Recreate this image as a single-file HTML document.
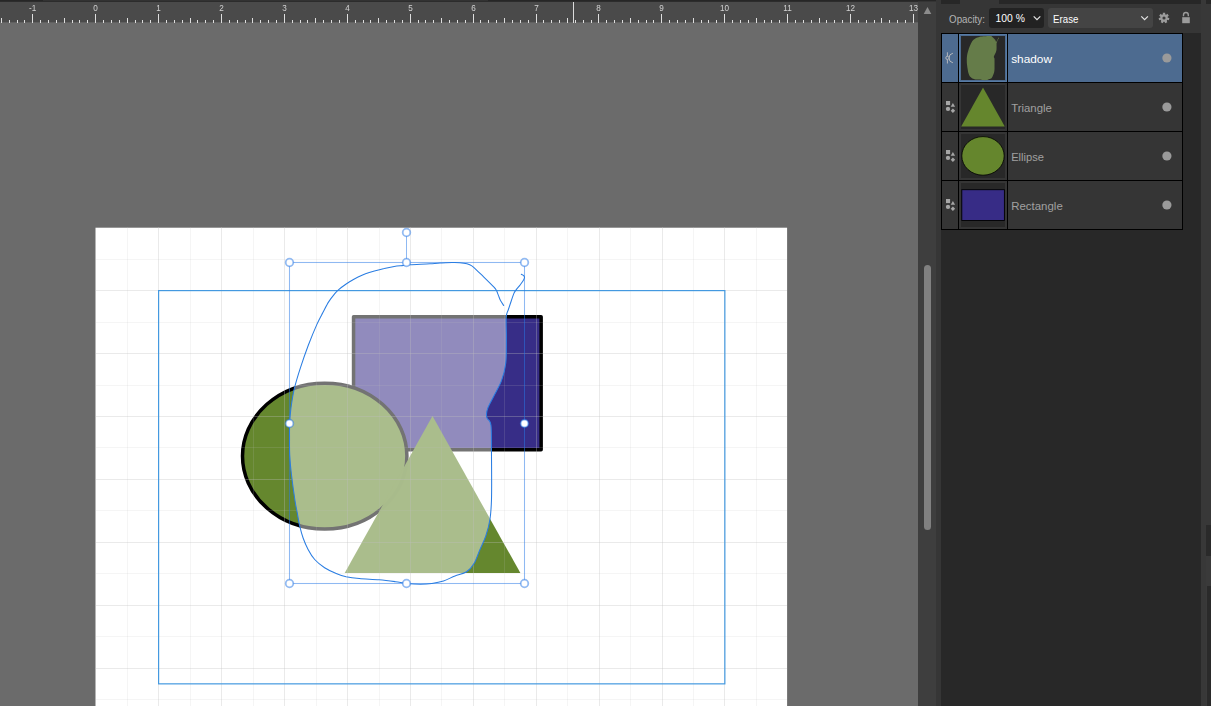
<!DOCTYPE html>
<html><head><meta charset="utf-8"><title>Layers</title>
<style>
html,body{margin:0;padding:0;background:#6b6b6b;}
body{width:1211px;height:706px;overflow:hidden;position:relative;font-family:"Liberation Sans",sans-serif;}
svg{position:absolute;left:0;top:0;}
svg text{font-family:"Liberation Sans",sans-serif;}
#rl{will-change:transform;}
</style></head><body>
<svg id="cv" width="1211" height="706" viewBox="0 0 1211 706">
<rect x="0" y="0" width="918" height="706" fill="#6b6b6b"/>
<!-- page -->
<rect x="95.5" y="227.7" width="691.6" height="480" fill="#fff"/>
<!-- shapes -->
<rect x="353.55" y="316.65" width="187.6" height="133.2" fill="#372d87" stroke="#000" stroke-width="3.5" stroke-linejoin="round"/>
<ellipse cx="324.7" cy="456.1" rx="82.2" ry="72.9" fill="#65872e" stroke="#000" stroke-width="3.5"/>
<path d="M432.5 416L520.4 573L344.7 573Z" fill="#65872e"/>
<clipPath id="tc"><path d="M432.5 416L520.4 573L344.7 573Z"/></clipPath>
<ellipse cx="324.7" cy="456.1" rx="82.2" ry="72.9" fill="none" stroke="#000" stroke-opacity="0.025" stroke-width="3.5" clip-path="url(#tc)"/>
<!-- erase shadow -->
<path d="M503.7 305.5C503.2 304.7 501.4 302.1 500.5 300.5C499.6 298.9 499.2 297.2 498.5 295.6C497.8 294.0 497.2 292.0 496.5 290.6C495.8 289.2 496.1 289.5 494.0 287.2C491.9 284.9 487.0 280.1 483.6 276.8C480.2 273.5 476.0 269.3 473.7 267.3C471.4 265.3 471.3 265.4 469.7 264.7C468.1 264.0 466.3 263.5 463.8 263.2C461.3 262.9 457.9 262.7 454.9 262.6C451.9 262.5 448.4 262.6 445.9 262.7C443.4 262.8 442.6 262.9 440.0 263.1C437.4 263.3 435.0 263.4 430.0 263.7C425.0 264.0 414.5 264.4 410.0 264.7C405.5 265.0 405.8 265.1 403.2 265.4C400.6 265.7 397.3 265.9 394.2 266.4C391.1 266.9 387.6 267.6 384.3 268.4C381.0 269.1 377.5 270.0 374.4 270.9C371.3 271.8 368.3 272.7 365.5 273.8C362.7 274.9 360.2 276.0 357.6 277.3C355.0 278.6 351.9 280.4 349.6 281.8C347.3 283.2 345.5 284.4 343.7 285.7C341.9 287.0 340.2 288.4 338.7 289.7C337.2 291.0 336.4 291.7 334.8 293.7C333.2 295.7 330.8 298.5 328.8 301.6C326.8 304.7 324.9 308.7 322.9 312.5C320.9 316.3 319.3 318.9 316.9 324.4C314.5 329.8 311.1 338.0 308.3 345.2C305.6 352.4 302.7 360.7 300.4 367.8C298.1 374.9 296.1 381.2 294.5 387.9C292.9 394.5 291.8 401.8 291.0 407.7C290.2 413.6 289.9 418.1 289.6 423.5C289.4 428.9 289.5 434.8 289.5 440.0C289.5 445.2 289.4 449.3 289.7 455.0C290.0 460.7 290.5 466.8 291.4 474.3C292.3 481.8 293.9 493.5 294.9 500.0C295.9 506.5 296.5 508.8 297.3 513.2C298.1 517.6 298.8 522.3 299.8 526.4C300.8 530.5 301.7 534.1 303.1 538.0C304.5 541.9 306.2 545.9 308.1 549.5C310.0 553.1 311.9 556.5 314.7 559.5C317.4 562.5 321.0 565.4 324.6 567.7C328.2 570.0 332.6 572.0 336.2 573.5C339.8 575.0 342.2 575.9 346.1 576.8C350.0 577.6 353.8 578.1 359.3 578.6C364.8 579.1 373.1 579.3 379.1 579.8C385.2 580.3 391.1 581.1 395.6 581.7C400.1 582.3 402.2 583.0 406.3 583.4C410.4 583.8 416.1 584.2 420.4 584.2C424.7 584.2 428.0 584.0 431.9 583.4C435.8 582.8 439.6 582.1 443.5 580.9C447.4 579.7 451.1 577.5 455.0 576.0C458.9 574.5 463.4 573.9 466.6 571.8C469.8 569.7 471.8 567.3 474.0 563.6C476.2 559.9 478.0 554.1 480.0 549.5C482.0 544.9 484.1 541.1 485.8 536.0C487.5 530.9 489.1 525.1 490.0 519.0C490.9 512.9 491.2 509.6 491.5 499.2C491.8 488.8 491.6 469.0 491.5 456.7C491.4 444.4 491.7 431.9 491.0 425.5C490.3 419.1 487.9 420.3 487.2 418.4C486.4 416.5 486.4 415.8 486.5 414.0C486.6 412.2 486.8 410.7 488.0 407.6C489.2 404.6 491.8 400.1 494.0 395.7C496.2 391.2 499.4 386.3 501.4 380.9C503.4 375.4 505.0 369.9 505.8 363.0C506.6 356.1 506.3 346.8 506.4 339.2C506.5 331.6 505.9 322.3 506.2 317.4C506.5 312.4 507.5 312.3 508.4 309.5C509.3 306.7 510.5 303.1 511.4 300.5C512.3 297.9 513.0 295.4 513.8 293.6C514.6 291.8 515.2 291.1 516.3 289.6C517.4 288.1 519.1 286.4 520.3 284.7C521.5 283.0 523.0 280.9 523.7 279.7C524.4 278.5 524.5 278.0 524.5 277.3C524.5 276.6 524.2 276.1 523.7 275.6C523.2 275.1 521.7 274.5 521.3 274.3Z" fill="#fff" fill-opacity="0.45"/>
<!-- grid -->
<g shape-rendering="crispEdges" fill="#c0c0c0">
<rect x="127" y="227" width="1" height="479" fill-opacity="0.16"/>
<rect x="158" y="227" width="1" height="479" fill-opacity="0.33"/>
<rect x="190" y="227" width="1" height="479" fill-opacity="0.16"/>
<rect x="221" y="227" width="1" height="479" fill-opacity="0.33"/>
<rect x="253" y="227" width="1" height="479" fill-opacity="0.16"/>
<rect x="284" y="227" width="1" height="479" fill-opacity="0.33"/>
<rect x="316" y="227" width="1" height="479" fill-opacity="0.16"/>
<rect x="347" y="227" width="1" height="479" fill-opacity="0.33"/>
<rect x="379" y="227" width="1" height="479" fill-opacity="0.16"/>
<rect x="410" y="227" width="1" height="479" fill-opacity="0.33"/>
<rect x="441" y="227" width="1" height="479" fill-opacity="0.16"/>
<rect x="473" y="227" width="1" height="479" fill-opacity="0.33"/>
<rect x="504" y="227" width="1" height="479" fill-opacity="0.16"/>
<rect x="536" y="227" width="1" height="479" fill-opacity="0.33"/>
<rect x="567" y="227" width="1" height="479" fill-opacity="0.16"/>
<rect x="599" y="227" width="1" height="479" fill-opacity="0.33"/>
<rect x="630" y="227" width="1" height="479" fill-opacity="0.16"/>
<rect x="662" y="227" width="1" height="479" fill-opacity="0.33"/>
<rect x="693" y="227" width="1" height="479" fill-opacity="0.16"/>
<rect x="724" y="227" width="1" height="479" fill-opacity="0.33"/>
<rect x="756" y="227" width="1" height="479" fill-opacity="0.16"/>
<rect x="95.5" y="259" width="691.7" height="1" fill-opacity="0.16"/>
<rect x="95.5" y="290" width="691.7" height="1" fill-opacity="0.33"/>
<rect x="95.5" y="322" width="691.7" height="1" fill-opacity="0.16"/>
<rect x="95.5" y="353" width="691.7" height="1" fill-opacity="0.33"/>
<rect x="95.5" y="385" width="691.7" height="1" fill-opacity="0.16"/>
<rect x="95.5" y="416" width="691.7" height="1" fill-opacity="0.33"/>
<rect x="95.5" y="447" width="691.7" height="1" fill-opacity="0.16"/>
<rect x="95.5" y="479" width="691.7" height="1" fill-opacity="0.33"/>
<rect x="95.5" y="510" width="691.7" height="1" fill-opacity="0.16"/>
<rect x="95.5" y="542" width="691.7" height="1" fill-opacity="0.33"/>
<rect x="95.5" y="573" width="691.7" height="1" fill-opacity="0.16"/>
<rect x="95.5" y="605" width="691.7" height="1" fill-opacity="0.33"/>
<rect x="95.5" y="636" width="691.7" height="1" fill-opacity="0.16"/>
<rect x="95.5" y="668" width="691.7" height="1" fill-opacity="0.33"/>
<rect x="95.5" y="699" width="691.7" height="1" fill-opacity="0.16"/>
</g>
<!-- margin -->
<rect x="158.6" y="290.6" width="566.25" height="393.25" fill="none" stroke="#4499e0" stroke-width="1.2"/>
<!-- selection -->
<g fill="none" stroke="#2878e6" stroke-opacity="0.52" stroke-width="1.05">
<rect x="289.5" y="262.5" width="235" height="321"/>
<line x1="406.5" y1="232.5" x2="406.5" y2="262.5"/>
</g>
<path d="M503.7 305.5C503.2 304.7 501.4 302.1 500.5 300.5C499.6 298.9 499.2 297.2 498.5 295.6C497.8 294.0 497.2 292.0 496.5 290.6C495.8 289.2 496.1 289.5 494.0 287.2C491.9 284.9 487.0 280.1 483.6 276.8C480.2 273.5 476.0 269.3 473.7 267.3C471.4 265.3 471.3 265.4 469.7 264.7C468.1 264.0 466.3 263.5 463.8 263.2C461.3 262.9 457.9 262.7 454.9 262.6C451.9 262.5 448.4 262.6 445.9 262.7C443.4 262.8 442.6 262.9 440.0 263.1C437.4 263.3 435.0 263.4 430.0 263.7C425.0 264.0 414.5 264.4 410.0 264.7C405.5 265.0 405.8 265.1 403.2 265.4C400.6 265.7 397.3 265.9 394.2 266.4C391.1 266.9 387.6 267.6 384.3 268.4C381.0 269.1 377.5 270.0 374.4 270.9C371.3 271.8 368.3 272.7 365.5 273.8C362.7 274.9 360.2 276.0 357.6 277.3C355.0 278.6 351.9 280.4 349.6 281.8C347.3 283.2 345.5 284.4 343.7 285.7C341.9 287.0 340.2 288.4 338.7 289.7C337.2 291.0 336.4 291.7 334.8 293.7C333.2 295.7 330.8 298.5 328.8 301.6C326.8 304.7 324.9 308.7 322.9 312.5C320.9 316.3 319.3 318.9 316.9 324.4C314.5 329.8 311.1 338.0 308.3 345.2C305.6 352.4 302.7 360.7 300.4 367.8C298.1 374.9 296.1 381.2 294.5 387.9C292.9 394.5 291.8 401.8 291.0 407.7C290.2 413.6 289.9 418.1 289.6 423.5C289.4 428.9 289.5 434.8 289.5 440.0C289.5 445.2 289.4 449.3 289.7 455.0C290.0 460.7 290.5 466.8 291.4 474.3C292.3 481.8 293.9 493.5 294.9 500.0C295.9 506.5 296.5 508.8 297.3 513.2C298.1 517.6 298.8 522.3 299.8 526.4C300.8 530.5 301.7 534.1 303.1 538.0C304.5 541.9 306.2 545.9 308.1 549.5C310.0 553.1 311.9 556.5 314.7 559.5C317.4 562.5 321.0 565.4 324.6 567.7C328.2 570.0 332.6 572.0 336.2 573.5C339.8 575.0 342.2 575.9 346.1 576.8C350.0 577.6 353.8 578.1 359.3 578.6C364.8 579.1 373.1 579.3 379.1 579.8C385.2 580.3 391.1 581.1 395.6 581.7C400.1 582.3 402.2 583.0 406.3 583.4C410.4 583.8 416.1 584.2 420.4 584.2C424.7 584.2 428.0 584.0 431.9 583.4C435.8 582.8 439.6 582.1 443.5 580.9C447.4 579.7 451.1 577.5 455.0 576.0C458.9 574.5 463.4 573.9 466.6 571.8C469.8 569.7 471.8 567.3 474.0 563.6C476.2 559.9 478.0 554.1 480.0 549.5C482.0 544.9 484.1 541.1 485.8 536.0C487.5 530.9 489.1 525.1 490.0 519.0C490.9 512.9 491.2 509.6 491.5 499.2C491.8 488.8 491.6 469.0 491.5 456.7C491.4 444.4 491.7 431.9 491.0 425.5C490.3 419.1 487.9 420.3 487.2 418.4C486.4 416.5 486.4 415.8 486.5 414.0C486.6 412.2 486.8 410.7 488.0 407.6C489.2 404.6 491.8 400.1 494.0 395.7C496.2 391.2 499.4 386.3 501.4 380.9C503.4 375.4 505.0 369.9 505.8 363.0C506.6 356.1 506.3 346.8 506.4 339.2C506.5 331.6 505.9 322.3 506.2 317.4C506.5 312.4 507.5 312.3 508.4 309.5C509.3 306.7 510.5 303.1 511.4 300.5C512.3 297.9 513.0 295.4 513.8 293.6C514.6 291.8 515.2 291.1 516.3 289.6C517.4 288.1 519.1 286.4 520.3 284.7C521.5 283.0 523.0 280.9 523.7 279.7C524.4 278.5 524.5 278.0 524.5 277.3C524.5 276.6 524.2 276.1 523.7 275.6C523.2 275.1 521.7 274.5 521.3 274.3" fill="none" stroke="#2a7de2" stroke-width="1.05" stroke-linecap="round" stroke-linejoin="round"/>
<g fill="#fff" stroke="#2878e6" stroke-opacity="0.5" stroke-width="1.8">
<circle cx="289.5" cy="262.5" r="3.8"/>
<circle cx="406.5" cy="262.5" r="3.8"/>
<circle cx="524.5" cy="262.5" r="3.8"/>
<circle cx="289.5" cy="423.5" r="3.8"/>
<circle cx="524.5" cy="423.5" r="3.8"/>
<circle cx="289.5" cy="583.5" r="3.8"/>
<circle cx="406.5" cy="583.5" r="3.8"/>
<circle cx="524.5" cy="583.5" r="3.8"/>
<circle cx="406.5" cy="232.5" r="3.8"/>
</g>
<!-- ruler -->
<rect x="0" y="0" width="918" height="22.3" fill="#4a4a4a"/>
<rect x="0" y="0" width="936" height="1.8" fill="#262626"/>
<rect x="43" y="0" width="445" height="0.9" fill="#343434"/>
<g fill="#dedede" shape-rendering="crispEdges">
<rect x="1" y="18.2" width="1" height="4.4"/>
<rect x="9" y="20.2" width="1" height="2.4"/>
<rect x="17" y="20.2" width="1" height="2.4"/>
<rect x="24" y="20.2" width="1" height="2.4"/>
<rect x="32" y="14.0" width="1" height="8.6"/>
<rect x="40" y="20.2" width="1" height="2.4"/>
<rect x="48" y="20.2" width="1" height="2.4"/>
<rect x="56" y="20.2" width="1" height="2.4"/>
<rect x="64" y="18.2" width="1" height="4.4"/>
<rect x="72" y="20.2" width="1" height="2.4"/>
<rect x="79" y="20.2" width="1" height="2.4"/>
<rect x="87" y="20.2" width="1" height="2.4"/>
<rect x="95" y="14.0" width="1" height="8.6"/>
<rect x="103" y="20.2" width="1" height="2.4"/>
<rect x="111" y="20.2" width="1" height="2.4"/>
<rect x="119" y="20.2" width="1" height="2.4"/>
<rect x="127" y="18.2" width="1" height="4.4"/>
<rect x="135" y="20.2" width="1" height="2.4"/>
<rect x="142" y="20.2" width="1" height="2.4"/>
<rect x="150" y="20.2" width="1" height="2.4"/>
<rect x="158" y="14.0" width="1" height="8.6"/>
<rect x="166" y="20.2" width="1" height="2.4"/>
<rect x="174" y="20.2" width="1" height="2.4"/>
<rect x="182" y="20.2" width="1" height="2.4"/>
<rect x="190" y="18.2" width="1" height="4.4"/>
<rect x="197" y="20.2" width="1" height="2.4"/>
<rect x="205" y="20.2" width="1" height="2.4"/>
<rect x="213" y="20.2" width="1" height="2.4"/>
<rect x="221" y="14.0" width="1" height="8.6"/>
<rect x="229" y="20.2" width="1" height="2.4"/>
<rect x="237" y="20.2" width="1" height="2.4"/>
<rect x="245" y="20.2" width="1" height="2.4"/>
<rect x="252" y="18.2" width="1" height="4.4"/>
<rect x="260" y="20.2" width="1" height="2.4"/>
<rect x="268" y="20.2" width="1" height="2.4"/>
<rect x="276" y="20.2" width="1" height="2.4"/>
<rect x="284" y="14.0" width="1" height="8.6"/>
<rect x="292" y="20.2" width="1" height="2.4"/>
<rect x="300" y="20.2" width="1" height="2.4"/>
<rect x="307" y="20.2" width="1" height="2.4"/>
<rect x="315" y="18.2" width="1" height="4.4"/>
<rect x="323" y="20.2" width="1" height="2.4"/>
<rect x="331" y="20.2" width="1" height="2.4"/>
<rect x="339" y="20.2" width="1" height="2.4"/>
<rect x="347" y="14.0" width="1" height="8.6"/>
<rect x="355" y="20.2" width="1" height="2.4"/>
<rect x="363" y="20.2" width="1" height="2.4"/>
<rect x="370" y="20.2" width="1" height="2.4"/>
<rect x="378" y="18.2" width="1" height="4.4"/>
<rect x="386" y="20.2" width="1" height="2.4"/>
<rect x="394" y="20.2" width="1" height="2.4"/>
<rect x="402" y="20.2" width="1" height="2.4"/>
<rect x="410" y="14.0" width="1" height="8.6"/>
<rect x="418" y="20.2" width="1" height="2.4"/>
<rect x="425" y="20.2" width="1" height="2.4"/>
<rect x="433" y="20.2" width="1" height="2.4"/>
<rect x="441" y="18.2" width="1" height="4.4"/>
<rect x="449" y="20.2" width="1" height="2.4"/>
<rect x="457" y="20.2" width="1" height="2.4"/>
<rect x="465" y="20.2" width="1" height="2.4"/>
<rect x="473" y="14.0" width="1" height="8.6"/>
<rect x="480" y="20.2" width="1" height="2.4"/>
<rect x="488" y="20.2" width="1" height="2.4"/>
<rect x="496" y="20.2" width="1" height="2.4"/>
<rect x="504" y="18.2" width="1" height="4.4"/>
<rect x="512" y="20.2" width="1" height="2.4"/>
<rect x="520" y="20.2" width="1" height="2.4"/>
<rect x="528" y="20.2" width="1" height="2.4"/>
<rect x="536" y="14.0" width="1" height="8.6"/>
<rect x="543" y="20.2" width="1" height="2.4"/>
<rect x="551" y="20.2" width="1" height="2.4"/>
<rect x="559" y="20.2" width="1" height="2.4"/>
<rect x="567" y="18.2" width="1" height="4.4"/>
<rect x="575" y="20.2" width="1" height="2.4"/>
<rect x="583" y="20.2" width="1" height="2.4"/>
<rect x="591" y="20.2" width="1" height="2.4"/>
<rect x="598" y="14.0" width="1" height="8.6"/>
<rect x="606" y="20.2" width="1" height="2.4"/>
<rect x="614" y="20.2" width="1" height="2.4"/>
<rect x="622" y="20.2" width="1" height="2.4"/>
<rect x="630" y="18.2" width="1" height="4.4"/>
<rect x="638" y="20.2" width="1" height="2.4"/>
<rect x="646" y="20.2" width="1" height="2.4"/>
<rect x="653" y="20.2" width="1" height="2.4"/>
<rect x="661" y="14.0" width="1" height="8.6"/>
<rect x="669" y="20.2" width="1" height="2.4"/>
<rect x="677" y="20.2" width="1" height="2.4"/>
<rect x="685" y="20.2" width="1" height="2.4"/>
<rect x="693" y="18.2" width="1" height="4.4"/>
<rect x="701" y="20.2" width="1" height="2.4"/>
<rect x="708" y="20.2" width="1" height="2.4"/>
<rect x="716" y="20.2" width="1" height="2.4"/>
<rect x="724" y="14.0" width="1" height="8.6"/>
<rect x="732" y="20.2" width="1" height="2.4"/>
<rect x="740" y="20.2" width="1" height="2.4"/>
<rect x="748" y="20.2" width="1" height="2.4"/>
<rect x="756" y="18.2" width="1" height="4.4"/>
<rect x="764" y="20.2" width="1" height="2.4"/>
<rect x="771" y="20.2" width="1" height="2.4"/>
<rect x="779" y="20.2" width="1" height="2.4"/>
<rect x="787" y="14.0" width="1" height="8.6"/>
<rect x="795" y="20.2" width="1" height="2.4"/>
<rect x="803" y="20.2" width="1" height="2.4"/>
<rect x="811" y="20.2" width="1" height="2.4"/>
<rect x="819" y="18.2" width="1" height="4.4"/>
<rect x="826" y="20.2" width="1" height="2.4"/>
<rect x="834" y="20.2" width="1" height="2.4"/>
<rect x="842" y="20.2" width="1" height="2.4"/>
<rect x="850" y="14.0" width="1" height="8.6"/>
<rect x="858" y="20.2" width="1" height="2.4"/>
<rect x="866" y="20.2" width="1" height="2.4"/>
<rect x="874" y="20.2" width="1" height="2.4"/>
<rect x="881" y="18.2" width="1" height="4.4"/>
<rect x="889" y="20.2" width="1" height="2.4"/>
<rect x="897" y="20.2" width="1" height="2.4"/>
<rect x="905" y="20.2" width="1" height="2.4"/>
<rect x="913" y="14.0" width="1" height="8.6"/>
<rect x="573" y="2" width="1" height="20.6" fill="#dcdcdc"/>
</g>
<!-- scrollbar -->
<rect x="918" y="1.8" width="18" height="706" fill="#3e3e3e"/>
<path d="M927.5 7L931.3 14L923.7 14Z" fill="#8c8c8c"/>
<rect x="924" y="265" width="7" height="265" rx="3.5" fill="#808080"/>
<!-- separator + panel -->
<rect x="936" y="0" width="5" height="706" fill="#363636"/>
<rect x="941" y="0" width="260" height="706" fill="#282828"/>
<rect x="941" y="0" width="260" height="33" fill="#363636"/>
<rect x="941" y="0" width="19" height="4" fill="#272727"/>
<rect x="999" y="0" width="202" height="4" fill="#272727"/>
<rect x="1201" y="0" width="10" height="706" fill="#383838"/>
<rect x="1206" y="0" width="5" height="4" fill="#272727"/>
<rect x="1206" y="525" width="5" height="181" fill="#2a2a2a"/>
<rect x="1206" y="556" width="5" height="30" fill="#3a3a3a"/>
<rect x="1206" y="586" width="1" height="120" fill="#3a3a3a"/>
<!-- toolbar -->
<text x="949.1" y="23" font-size="10.6px" fill="#b4b4b4" textLength="35.8" lengthAdjust="spacingAndGlyphs">Opacity:</text>
<rect x="989" y="8" width="55" height="20" rx="3" fill="#222"/>
<text x="995.6" y="22" font-size="11.5px" fill="#fff" textLength="29.3" lengthAdjust="spacingAndGlyphs">100 %</text>
<path d="M1033.7 16.4L1037 19.7L1040.3 16.4" fill="none" stroke="#e4e4e4" stroke-width="1.2"/>
<rect x="1048" y="8" width="105" height="20" rx="3" fill="#444"/>
<text x="1053.1" y="23" font-size="11.4px" fill="#fff" textLength="25.3" lengthAdjust="spacingAndGlyphs">Erase</text>
<path d="M1141.3 16.4L1144.6 19.7L1147.9 16.4" fill="none" stroke="#e4e4e4" stroke-width="1.2"/>
<!-- gear -->
<g transform="translate(1164 18)" fill="#9c9c9c">
<rect x="-1.15" y="-5.25" width="2.3" height="3" transform="rotate(0.00)"/><rect x="-1.15" y="-5.25" width="2.3" height="3" transform="rotate(51.43)"/><rect x="-1.15" y="-5.25" width="2.3" height="3" transform="rotate(102.86)"/><rect x="-1.15" y="-5.25" width="2.3" height="3" transform="rotate(154.29)"/><rect x="-1.15" y="-5.25" width="2.3" height="3" transform="rotate(205.71)"/><rect x="-1.15" y="-5.25" width="2.3" height="3" transform="rotate(257.14)"/><rect x="-1.15" y="-5.25" width="2.3" height="3" transform="rotate(308.57)"/>
<circle r="3.7"/>
<circle r="1.55" fill="#3a3a3a"/>
</g>
<!-- lock -->
<rect x="1182.2" y="17.2" width="7.6" height="6" fill="#9c9c9c"/>
<path d="M1183.5 16.3V14.9A2.4 2.4 0 0 1 1188.3 14.9V16.3" fill="none" stroke="#9c9c9c" stroke-width="1.4"/>
<!-- layer rows -->
<g transform="translate(941 33)"><rect x="0" y="0" width="242" height="50" fill="#000"/><rect x="1" y="1" width="16" height="48" fill="#4d6b90"/><rect x="18" y="1" width="48" height="48" fill="#4d6b90"/><rect x="67" y="1" width="174" height="48" fill="#4d6b90"/><rect x="18.5" y="1.5" width="47" height="47" fill="none" stroke="#577ba5" stroke-width="1"/><rect x="20" y="3" width="44" height="44" fill="#282828"/><g transform="translate(1 1)"><g fill="none" stroke="#b4b6ba" stroke-width="1"><line x1="5.4" y1="18.3" x2="5.4" y2="29.5"/><path d="M10.9 19.2A4.9 4.9 0 0 0 10.9 28.8"/><circle cx="5.4" cy="23.9" r="1.6" fill="#4d6b90"/></g></g><g transform="translate(20 3)"><g transform="translate(22 22) scale(0.1373) translate(-407.5 -422.75)"><path d="M503.7 305.5C503.2 304.7 501.4 302.1 500.5 300.5C499.6 298.9 499.2 297.2 498.5 295.6C497.8 294.0 497.2 292.0 496.5 290.6C495.8 289.2 496.1 289.5 494.0 287.2C491.9 284.9 487.0 280.1 483.6 276.8C480.2 273.5 476.0 269.3 473.7 267.3C471.4 265.3 471.3 265.4 469.7 264.7C468.1 264.0 466.3 263.5 463.8 263.2C461.3 262.9 457.9 262.7 454.9 262.6C451.9 262.5 448.4 262.6 445.9 262.7C443.4 262.8 442.6 262.9 440.0 263.1C437.4 263.3 435.0 263.4 430.0 263.7C425.0 264.0 414.5 264.4 410.0 264.7C405.5 265.0 405.8 265.1 403.2 265.4C400.6 265.7 397.3 265.9 394.2 266.4C391.1 266.9 387.6 267.6 384.3 268.4C381.0 269.1 377.5 270.0 374.4 270.9C371.3 271.8 368.3 272.7 365.5 273.8C362.7 274.9 360.2 276.0 357.6 277.3C355.0 278.6 351.9 280.4 349.6 281.8C347.3 283.2 345.5 284.4 343.7 285.7C341.9 287.0 340.2 288.4 338.7 289.7C337.2 291.0 336.4 291.7 334.8 293.7C333.2 295.7 330.8 298.5 328.8 301.6C326.8 304.7 324.9 308.7 322.9 312.5C320.9 316.3 319.3 318.9 316.9 324.4C314.5 329.8 311.1 338.0 308.3 345.2C305.6 352.4 302.7 360.7 300.4 367.8C298.1 374.9 296.1 381.2 294.5 387.9C292.9 394.5 291.8 401.8 291.0 407.7C290.2 413.6 289.9 418.1 289.6 423.5C289.4 428.9 289.5 434.8 289.5 440.0C289.5 445.2 289.4 449.3 289.7 455.0C290.0 460.7 290.5 466.8 291.4 474.3C292.3 481.8 293.9 493.5 294.9 500.0C295.9 506.5 296.5 508.8 297.3 513.2C298.1 517.6 298.8 522.3 299.8 526.4C300.8 530.5 301.7 534.1 303.1 538.0C304.5 541.9 306.2 545.9 308.1 549.5C310.0 553.1 311.9 556.5 314.7 559.5C317.4 562.5 321.0 565.4 324.6 567.7C328.2 570.0 332.6 572.0 336.2 573.5C339.8 575.0 342.2 575.9 346.1 576.8C350.0 577.6 353.8 578.1 359.3 578.6C364.8 579.1 373.1 579.3 379.1 579.8C385.2 580.3 391.1 581.1 395.6 581.7C400.1 582.3 402.2 583.0 406.3 583.4C410.4 583.8 416.1 584.2 420.4 584.2C424.7 584.2 428.0 584.0 431.9 583.4C435.8 582.8 439.6 582.1 443.5 580.9C447.4 579.7 451.1 577.5 455.0 576.0C458.9 574.5 463.4 573.9 466.6 571.8C469.8 569.7 471.8 567.3 474.0 563.6C476.2 559.9 478.0 554.1 480.0 549.5C482.0 544.9 484.1 541.1 485.8 536.0C487.5 530.9 489.1 525.1 490.0 519.0C490.9 512.9 491.2 509.6 491.5 499.2C491.8 488.8 491.6 469.0 491.5 456.7C491.4 444.4 491.7 431.9 491.0 425.5C490.3 419.1 487.9 420.3 487.2 418.4C486.4 416.5 486.4 415.8 486.5 414.0C486.6 412.2 486.8 410.7 488.0 407.6C489.2 404.6 491.8 400.1 494.0 395.7C496.2 391.2 499.4 386.3 501.4 380.9C503.4 375.4 505.0 369.9 505.8 363.0C506.6 356.1 506.3 346.8 506.4 339.2C506.5 331.6 505.9 322.3 506.2 317.4C506.5 312.4 507.5 312.3 508.4 309.5C509.3 306.7 510.5 303.1 511.4 300.5C512.3 297.9 513.0 295.4 513.8 293.6C514.6 291.8 515.2 291.1 516.3 289.6C517.4 288.1 519.1 286.4 520.3 284.7C521.5 283.0 523.0 280.9 523.7 279.7C524.4 278.5 524.5 278.0 524.5 277.3C524.5 276.6 524.2 276.1 523.7 275.6C523.2 275.1 521.7 274.5 521.3 274.3Z" fill="#657c49"/></g></g><text x="70.2" y="30" font-size="11.5px" fill="#fff" textLength="40.8" lengthAdjust="spacingAndGlyphs">shadow</text><circle cx="225.9" cy="25" r="4.6" fill="#9a9a9a"/></g>
<g transform="translate(941 82)"><rect x="0" y="0" width="242" height="50" fill="#000"/><rect x="1" y="1" width="16" height="48" fill="#353535"/><rect x="18" y="1" width="48" height="48" fill="#353535"/><rect x="67" y="1" width="174" height="48" fill="#353535"/><rect x="20" y="3" width="44" height="44" fill="#282828"/><g transform="translate(1 1)"><g fill="#a6a6a6"><rect x="4" y="18" width="4.1" height="4.1"/><path d="M10.9 19.9L13.1 23.8H8.7Z"/><circle cx="6" cy="25.9" r="2.15"/><path d="M10.9 25.6L13.1 27.8L10.9 30L8.7 27.8Z"/></g></g><g transform="translate(20 3)"><path d="M22 2.4L43.8 41.6H0.2Z" fill="#65862d"/></g><text x="70.2" y="30" font-size="11.5px" fill="#a0a0a0" textLength="40.7" lengthAdjust="spacingAndGlyphs">Triangle</text><circle cx="225.9" cy="25" r="4.6" fill="#9a9a9a"/></g>
<g transform="translate(941 131)"><rect x="0" y="0" width="242" height="50" fill="#000"/><rect x="1" y="1" width="16" height="48" fill="#353535"/><rect x="18" y="1" width="48" height="48" fill="#353535"/><rect x="67" y="1" width="174" height="48" fill="#353535"/><rect x="20" y="3" width="44" height="44" fill="#282828"/><g transform="translate(1 1)"><g fill="#a6a6a6"><rect x="4" y="18" width="4.1" height="4.1"/><path d="M10.9 19.9L13.1 23.8H8.7Z"/><circle cx="6" cy="25.9" r="2.15"/><path d="M10.9 25.6L13.1 27.8L10.9 30L8.7 27.8Z"/></g></g><g transform="translate(20 3)"><ellipse cx="22" cy="21.9" rx="21.2" ry="19.3" fill="#65862d" stroke="#000" stroke-width="0.8"/></g><text x="70.2" y="30" font-size="11.5px" fill="#a0a0a0" textLength="32.8" lengthAdjust="spacingAndGlyphs">Ellipse</text><circle cx="225.9" cy="25" r="4.6" fill="#9a9a9a"/></g>
<g transform="translate(941 180)"><rect x="0" y="0" width="242" height="50" fill="#000"/><rect x="1" y="1" width="16" height="48" fill="#353535"/><rect x="18" y="1" width="48" height="48" fill="#353535"/><rect x="67" y="1" width="174" height="48" fill="#353535"/><rect x="20" y="3" width="44" height="44" fill="#282828"/><g transform="translate(1 1)"><g fill="#a6a6a6"><rect x="4" y="18" width="4.1" height="4.1"/><path d="M10.9 19.9L13.1 23.8H8.7Z"/><circle cx="6" cy="25.9" r="2.15"/><path d="M10.9 25.6L13.1 27.8L10.9 30L8.7 27.8Z"/></g></g><g transform="translate(20 3)"><rect x="0.8" y="6.7" width="42.6" height="30.8" fill="#372c86" stroke="#000" stroke-width="0.9"/></g><text x="70.2" y="30" font-size="11.5px" fill="#a0a0a0" textLength="51.6" lengthAdjust="spacingAndGlyphs">Rectangle</text><circle cx="225.9" cy="25" r="4.6" fill="#9a9a9a"/></g>

</svg>
<svg id="rl" width="918" height="23" viewBox="0 0 918 23">
<g fill="#d2d2d2" font-size="9.5px" text-anchor="middle">
<text transform="translate(32.6 11.4) scale(0.86 1)">-1</text>
<text transform="translate(95.6 11.4) scale(0.86 1)">0</text>
<text transform="translate(158.6 11.4) scale(0.86 1)">1</text>
<text transform="translate(221.6 11.4) scale(0.86 1)">2</text>
<text transform="translate(284.6 11.4) scale(0.86 1)">3</text>
<text transform="translate(347.6 11.4) scale(0.86 1)">4</text>
<text transform="translate(410.6 11.4) scale(0.86 1)">5</text>
<text transform="translate(473.6 11.4) scale(0.86 1)">6</text>
<text transform="translate(536.6 11.4) scale(0.86 1)">7</text>
<text transform="translate(598.6 11.4) scale(0.86 1)">8</text>
<text transform="translate(661.6 11.4) scale(0.86 1)">9</text>
<text transform="translate(724.6 11.4) scale(0.86 1)">10</text>
<text transform="translate(787.6 11.4) scale(0.86 1)">11</text>
<text transform="translate(850.6 11.4) scale(0.86 1)">12</text>
<text transform="translate(913.6 11.4) scale(0.86 1)">13</text>
</g>
</svg>
</body></html>
